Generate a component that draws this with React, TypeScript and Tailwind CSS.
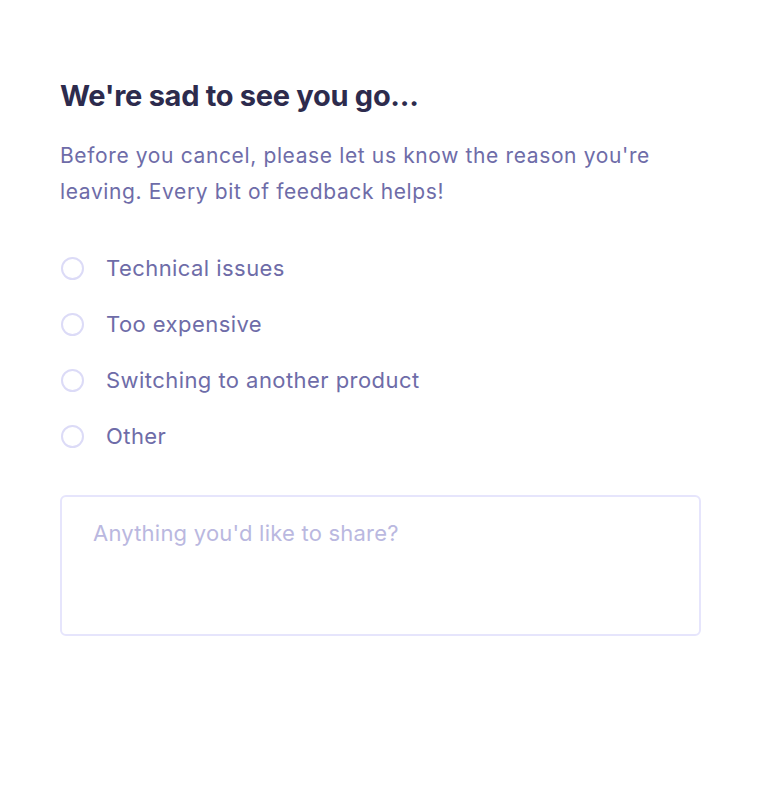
const reasons = ['Technical issues', 'Too expensive', 'Switching to another product', 'Other']

export default function App() {
  return (
    <div className="min-h-screen bg-white font-['Inter',sans-serif]">
      <div className="px-[60px] pt-[78px]">
        <h1 className="text-[29px] leading-[36px] font-bold text-[#2d2b4d] tracking-[-0.01em]">
          We're sad to see you go...
        </h1>
        <p className="mt-[24px] text-[21px] leading-[36px] tracking-[0.03em] text-[#6e6ca8] max-w-[640px]">
          Before you cancel, please let us know the reason you're leaving. Every bit of feedback helps!
        </p>

        <div className="mt-[44px] flex flex-col gap-[28px]">
          {reasons.map((r) => (
            <label key={r} className="flex items-center gap-[22px] h-[28px]">
              <span className="ml-px w-[23px] h-[23px] rounded-full border-2 border-[#dcdbf7] bg-white" />
              <span className="text-[22px] tracking-[0.02em] text-[#6e6ca8]">{r}</span>
            </label>
          ))}
        </div>

        <textarea
          placeholder="Anything you'd like to share?"
          className="mt-[45px] block w-[641px] h-[141px] resize-none rounded-[6px] border-2 border-[#e6e5fc] px-[31px] py-[20px] text-[22px] leading-[32px] tracking-[0.01em] text-[#6e6ca8] placeholder:text-[#bab8e0] outline-none"
        />
      </div>
    </div>
  )
}
